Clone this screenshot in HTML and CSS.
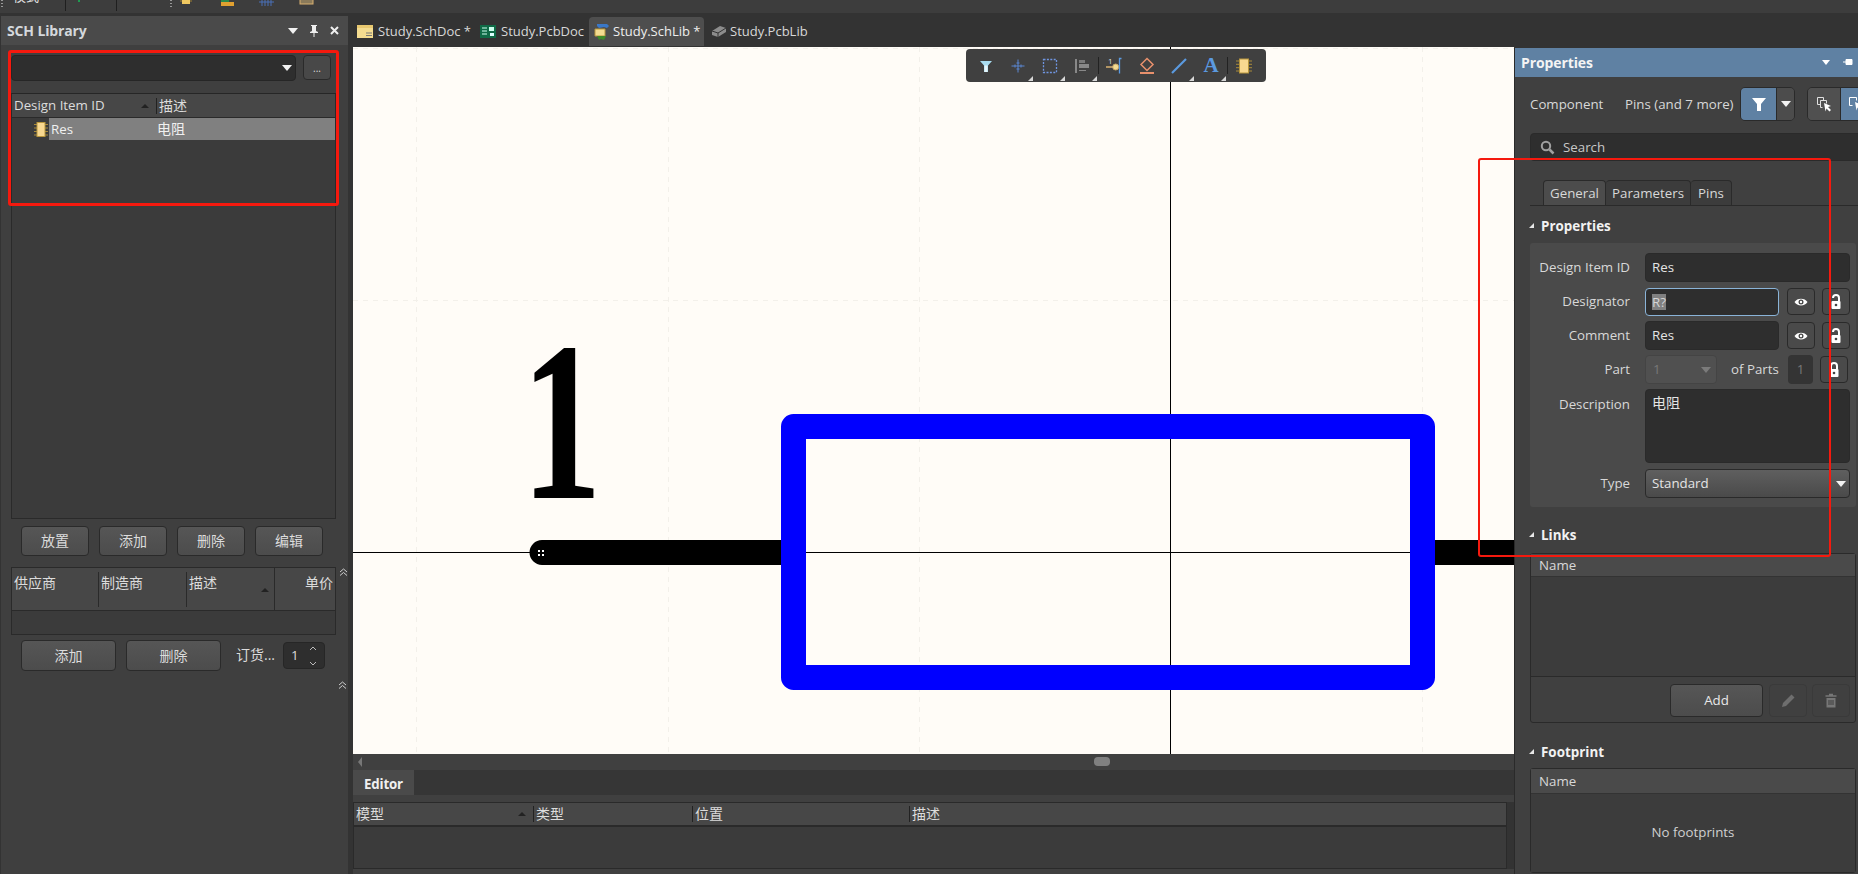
FILE: index.html
```html
<!DOCTYPE html>
<html lang="zh">
<head>
<meta charset="utf-8">
<title>SCH Library</title>
<link rel="stylesheet" href="styles.css">
</head>
<body>
<div class="app">
  <div class="topbar">
    <span class="grip"></span>
    <span class="top-label">模式</span>
    <span class="top-sep s1"></span>
    <span class="top-dot"></span>
    <span class="top-sep s2"></span>
    <span class="grip g2"></span>
    <svg class="top-ic i1" width="12" height="6" viewBox="0 0 12 6"><rect x="2" y="-4" width="8" height="8" fill="#f0c860"/><path d="M0 1h2M10 1h2" stroke="#a08030"/></svg>
    <svg class="top-ic i2" width="16" height="7" viewBox="0 0 16 7"><rect x="2" y="0" width="8" height="2" fill="#2a8a4a"/><rect x="2" y="2" width="13" height="4" fill="#e0a030"/></svg>
    <svg class="top-ic i3" width="15" height="6" viewBox="0 0 15 6"><path d="M0 2h15M3 0v6M6 0v6M9 0v6M12 0v6" stroke="#4a70b8"/></svg>
    <svg class="top-ic i4" width="15" height="6" viewBox="0 0 15 6"><rect x="1" y="-3" width="13" height="7" fill="#8a7a5a" stroke="#d8b070"/></svg>
  </div>

  <div class="main">
    <aside class="left">
      <header class="panel-head">
        <h1 class="panel-title">SCH Library</h1>
        <span class="head-icons">
          <span class="tri-down"></span>
          <svg width="10" height="12" viewBox="0 0 10 12"><path d="M2 0h6v1H7v5l2 1v1H5.500v4h-1V8H1V7l2-1V1H2z" fill="#eee"/></svg>
          <svg width="9" height="9" viewBox="0 0 9 9"><path d="M1 1l7 7M8 1L1 8" stroke="#eee" stroke-width="2"/></svg>
        </span>
      </header>
      <div class="combo-row">
        <div class="combo"><span class="tri-down"></span></div>
        <button class="btn more">...</button>
      </div>
      <div class="tree">
        <div class="tree-head">
          <span class="th-id">Design Item ID<i class="sort"></i></span>
          <span class="th-desc">描述</span>
        </div>
        <div class="tree-row">
          <svg class="comp-ic" width="14" height="15" viewBox="0 0 14 15"><path d="M0 2.500h14M0 6h14M0 9.500h14M0 13h14" stroke="#a88a3a"/><rect x="3" y="0.500" width="8" height="14" fill="#f8d890" stroke="#b8963c"/></svg>
          <span class="row-sel"><span class="rs-name">Res</span><span class="rs-desc">电阻</span></span>
        </div>
      </div>
      <div class="btn-row">
        <button class="btn act">放置</button>
        <button class="btn act">添加</button>
        <button class="btn act">删除</button>
        <button class="btn act">编辑</button>
      </div>
      <div class="supplier-wrap">
        <div class="supplier">
          <div class="sup-head">
            <span class="sup-cell">供应商</span>
            <span class="sup-cell">制造商</span>
            <span class="sup-cell tall">描述<i class="sort"></i></span>
            <span class="sup-cell end">单价</span>
          </div>
          <div class="sup-body"></div>
        </div>
        <svg class="chev" width="9" height="8" viewBox="0 0 9 8"><path d="M1 4l3.500-3L8 4M1 7.500l3.500-3 3.500 3" fill="none" stroke="#cfcfcf"/></svg>
      </div>
      <div class="btn-row two">
        <button class="btn act wide">添加</button>
        <button class="btn act wide">删除</button>
        <span class="order-label">订货...</span>
        <div class="spin"><span>1</span>
          <svg width="8" height="20" viewBox="0 0 8 20"><path d="M1 4l3-3 3 3M1 16l3 3 3-3" fill="none" stroke="#bbb"/></svg>
        </div>
      </div>
      <div class="chev-row">
        <svg class="chev" width="9" height="8" viewBox="0 0 9 8"><path d="M1 4l3.500-3L8 4M1 7.500l3.500-3 3.500 3" fill="none" stroke="#cfcfcf"/></svg>
      </div>
    </aside>

    <section class="center">
      <nav class="doc-tabs">
        <span class="doc-tab">
          <svg width="16" height="13" viewBox="0 0 16 13"><rect width="16" height="13" fill="#f4dc90"/><rect x="0" y="0" width="16" height="3" fill="#e8c870"/><path d="M9 8h6M9 10.500h6" stroke="#777"/></svg>
          <span>Study.SchDoc *</span>
        </span>
        <span class="doc-tab t2">
          <svg width="16" height="13" viewBox="0 0 16 13"><rect width="16" height="13" fill="#0f6a46"/><path d="M2 3h5M2 6h5M2 9h5" stroke="#cfe"/><rect x="9" y="2" width="5" height="4" fill="#cfe"/><rect x="10" y="8" width="4" height="3" fill="#dff"/></svg>
          <span>Study.PcbDoc</span>
        </span>
        <span class="doc-tab active">
          <svg width="16" height="18" viewBox="0 0 16 18"><path d="M3 1h10l2 2-2 2-3-1-5 1-2-2z" fill="#3a78c8"/><path d="M1 6h10v7H1z" fill="#f4dc90" stroke="#b8963c"/><path d="M3 13h9l-2 4-3-1-2 1z" fill="#3f8a2a"/></svg>
          <span>Study.SchLib *</span>
        </span>
        <span class="doc-tab t4">
          <svg width="16" height="13" viewBox="0 0 16 13"><path d="M1 6l8-5 6 2v4l-8 5-6-2z" fill="#8c8c8c"/><path d="M1 6l6 2 8-5M7 8v4" stroke="#333" fill="none"/></svg>
          <span>Study.PcbLib</span>
        </span>
      </nav>

      <div class="canvas">
        <svg class="sheet" width="1162" height="707" viewBox="0 0 1162 707">
          <path class="grid-lines" d="M63.500 0V707M315.500 0V707M566.500 0V707M1069.500 0V707M0 1.500H1162M0 253.500H1162"/>
          <path class="cross" d="M817.500 0V707M0 505.500H1162"/>
          <path d="M189 493H428V518H189A12.500 12.500 0 0 1 189 493Z" fill="#000"/>
          <rect x="1082" y="493" width="80" height="25" fill="#000"/>
          <rect x="440.500" y="379.500" width="629" height="251" fill="none" stroke="#0000ff" stroke-width="25" stroke-linejoin="round"/>
          <path d="M185 503h2v2h-2zM189 503h2v2h-2zM185 507h2v2h-2zM189 507h2v2h-2z" fill="#fff"/>
        </svg>
        <div class="pin-number">1</div>

        <div class="toolbar">
          <span class="tb-btn">
            <svg width="20" height="20" viewBox="0 0 20 20"><path d="M4 5h12l-4 4.500V16H8V9.500z" fill="#a8dcf0"/><path d="M8.500 9.500h3V16h-3z" fill="#e8f6fb"/></svg>
          </span>
          <span class="tb-btn menu">
            <svg width="20" height="20" viewBox="0 0 20 20"><path d="M10 3.500v13M3.500 10h13" stroke="#5b86d0"/><path d="M7 8.500v3M13 8.500v3M8.500 7h3M8.500 13h3" stroke="#5b86d0"/></svg>
          </span>
          <span class="tb-btn menu">
            <svg width="20" height="20" viewBox="0 0 20 20"><rect x="3.500" y="3.500" width="13" height="13" fill="none" stroke="#6f95e0" stroke-width="1.300" stroke-dasharray="2 1.400"/></svg>
          </span>
          <span class="tb-btn menu">
            <svg width="20" height="20" viewBox="0 0 20 20"><rect x="3" y="3" width="2" height="14" fill="#888"/><rect x="7" y="4" width="6" height="3" fill="#7a7a7a"/><rect x="7" y="8" width="10" height="4" fill="#888"/><path d="M7 14.500h7" stroke="#888"/></svg>
          </span>
          <i class="tb-sep"></i>
          <span class="tb-btn">
            <svg width="18" height="20" viewBox="0 0 18 20"><path d="M0 11h7" stroke="#d8b070" stroke-width="1.500"/><circle cx="9.700" cy="11" r="3" fill="#f4dc90" stroke="#c8a868"/><path d="M15.500 2.500h-2v15" fill="none" stroke="#5b9ae0" stroke-width="1.300"/><text class="tb-one" x="2" y="8">1</text></svg>
          </span>
          <span class="tb-btn">
            <svg width="20" height="20" viewBox="0 0 20 20"><path d="M10 2.500l6 6-6 6-6-6z" fill="none" stroke="#e8906c" stroke-width="1.500"/><rect x="3" y="16" width="14" height="2" fill="#e8906c"/></svg>
          </span>
          <span class="tb-btn menu">
            <svg width="20" height="20" viewBox="0 0 20 20"><path d="M3 17L17 3" stroke="#5b9ae0" stroke-width="2.200"/></svg>
          </span>
          <span class="tb-btn menu"><span class="tb-a">A</span></span>
          <i class="tb-sep"></i>
          <span class="tb-btn">
            <svg width="16" height="16" viewBox="0 0 16 16"><path d="M0 3h16M0 6.300h16M0 9.700h16M0 13h16" stroke="#a88a3a"/><rect x="3.500" y="1" width="9" height="14" fill="#f8d890" stroke="#b8963c"/></svg>
          </span>
        </div>
      </div>

      <div class="hscroll"><span class="tri-left"></span><span class="thumb"></span></div>
      <div class="editor-strip"><span class="editor-tab">Editor</span></div>
      <div class="editor-gap"></div>
      <div class="editor-table">
        <div class="ed-head">
          <span class="ed-col c1">模型<i class="sort"></i></span>
          <span class="ed-col c2">类型</span>
          <span class="ed-col c3">位置</span>
          <span class="ed-col c4">描述</span>
        </div>
      </div>
    </section>

    <aside class="right">
      <header class="prop-head">
        <h2 class="prop-title">Properties</h2>
        <span class="prop-icons">
          <span class="tri-down small"></span>
          <svg width="10" height="9" viewBox="0 0 10 9"><path d="M0 4h3M3 1.500h6v5H3z" fill="#fff" stroke="#fff"/></svg>
        </span>
      </header>
      <div class="filter-row">
        <span class="f-label">Component</span>
        <span class="f-label pins">Pins (and 7 more)</span>
        <div class="split">
          <span class="split-main">
            <svg width="16" height="16" viewBox="0 0 16 16"><path d="M1 2h14l-5 6v7H6V8z" fill="#fff"/></svg>
          </span>
          <span class="split-drop"><span class="tri-down"></span></span>
        </div>
        <div class="sel-mode">
          <span class="sel-a">
            <svg width="16" height="16" viewBox="0 0 16 16"><path d="M1.500 1.500h6v3M1.500 1.500v7h3" fill="none" stroke="#e0e0e0"/><path d="M4.500 4.500h6v3M4.500 4.500v7h2" fill="none" stroke="#e0e0e0"/><path d="M8 7l7 3-3 1 3 3-1.500 1.500-3-3-1 3z" fill="#fff"/></svg>
          </span>
          <span class="sel-b">
            <svg width="16" height="16" viewBox="0 0 16 16"><path d="M1.500 1.500h7v3M1.500 1.500v8h3" fill="none" stroke="#fff"/><path d="M7 6l7 3-3 1 3 3-1.500 1.500-3-3-1 3z" fill="#fff"/></svg>
          </span>
        </div>
      </div>
      <div class="search">
        <svg width="15" height="15" viewBox="0 0 15 15"><circle cx="6" cy="6" r="4.200" fill="none" stroke="#a0a0a0" stroke-width="2"/><path d="M9.500 9.500l4 4" stroke="#a0a0a0" stroke-width="2.500"/></svg>
        <span>Search</span>
      </div>
      <div class="tabs">
        <span class="tab on">General</span>
        <span class="tab w2">Parameters</span>
        <span class="tab w3">Pins</span>
      </div>
      <h3 class="sec-title first"><i class="sec-tri"></i>Properties</h3>
      <div class="card">
        <div class="field"><label>Design Item ID</label><div class="input grow">Res</div></div>
        <div class="field"><label>Designator</label><div class="input short focus"><span class="hl">R?</span></div>
          <span class="ic-btn"><svg width="14" height="10" viewBox="0 0 14 10"><path d="M0.500 5C3 0.500 11 0.500 13.500 5 11 9.500 3 9.500 0.500 5z" fill="#fff"/><circle cx="7" cy="5" r="2.500" fill="#444"/><circle cx="7" cy="5" r="1.200" fill="#fff"/></svg></span>
          <span class="ic-btn"><svg width="12" height="16" viewBox="0 0 12 16"><path d="M3 4a3 3 0 0 1 6 0v3" fill="none" stroke="#fff" stroke-width="2"/><rect x="1.500" y="7" width="9" height="8" rx="1" fill="#fff"/><circle cx="6" cy="11" r="1.300" fill="#444"/></svg></span>
        </div>
        <div class="field"><label>Comment</label><div class="input short">Res</div>
          <span class="ic-btn"><svg width="14" height="10" viewBox="0 0 14 10"><path d="M0.500 5C3 0.500 11 0.500 13.500 5 11 9.500 3 9.500 0.500 5z" fill="#fff"/><circle cx="7" cy="5" r="2.500" fill="#444"/><circle cx="7" cy="5" r="1.200" fill="#fff"/></svg></span>
          <span class="ic-btn"><svg width="12" height="16" viewBox="0 0 12 16"><path d="M3 4a3 3 0 0 1 6 0v3" fill="none" stroke="#fff" stroke-width="2"/><rect x="1.500" y="7" width="9" height="8" rx="1" fill="#fff"/><circle cx="6" cy="11" r="1.300" fill="#444"/></svg></span>
        </div>
        <div class="field"><label>Part</label>
          <div class="part-select">1<span class="tri-down dim"></span></div>
          <span class="of-parts">of Parts</span>
          <div class="part-box">1</div>
          <span class="ic-btn"><svg width="12" height="16" viewBox="0 0 12 16"><path d="M3 7V4a3 3 0 0 1 6 0v3" fill="none" stroke="#fff" stroke-width="2"/><rect x="1.500" y="7" width="9" height="8" rx="1" fill="#fff"/><circle cx="6" cy="11" r="1.300" fill="#444"/></svg></span>
        </div>
        <div class="field desc"><label>Description</label><div class="input grow area">电阻</div></div>
        <div class="field type"><label>Type</label><div class="type-select">Standard<span class="tri-down"></span></div></div>
      </div>

      <h3 class="sec-title links"><i class="sec-tri"></i>Links</h3>
      <div class="list">
        <div class="list-head">Name</div>
        <div class="list-body"></div>
        <div class="list-actions">
          <button class="btn add">Add</button>
          <span class="mute-btn"><svg width="16" height="16" viewBox="0 0 16 16"><path d="M11.500 1.500l3 3L6 13l-4 1 1-4z" fill="#6e6e6e"/></svg></span>
          <span class="mute-btn"><svg width="12" height="15" viewBox="0 0 12 15"><path d="M4 1.500h4M0.500 3h11" stroke="#777" stroke-width="1.500"/><path d="M1.500 5h9v9.500h-9z" fill="#777"/><path d="M4 7v5M6 7v5M8 7v5" stroke="#3f3f3f"/></svg></span>
        </div>
      </div>

      <h3 class="sec-title foot"><i class="sec-tri"></i>Footprint</h3>
      <div class="list footprints">
        <div class="list-head">Name</div>
        <div class="empty">No footprints</div>
      </div>
    </aside>
  </div>

  <div class="annot a-left"></div>
  <div class="annot a-right"></div>
</div>
</body>
</html>
```

FILE: styles.css
```css
* { box-sizing: border-box; }
html, body { margin: 0; padding: 0; background: #333; }
body { width: 1858px; height: 874px; overflow: hidden; }
h1, h2, h3 { margin: 0; }
.app {
  position: relative;
  width: 1858px; height: 874px; overflow: hidden;
  display: flex; flex-direction: column;
  font: 13.3px/1.2 "Open Sans", "Noto Sans CJK SC", sans-serif;
  color: #dcdcdc;
  background: #333;
}
button { font: inherit; color: inherit; }

/* shared glyphs */
.tri-down { display: inline-block; width: 0; height: 0; border: 5px solid transparent; border-top: 6px solid #f2f2f2; border-bottom: 0; }
.tri-down.small { border-width: 5px 4px 0; border-top-color: #fff; border-style: solid; border-left-color: transparent; border-right-color: transparent; }
.tri-down.dim { border-top-color: #7b7b7b; }
.sort { display: inline-block; width: 0; height: 0; border: 4px solid transparent; border-bottom: 4px solid #222; border-top: 0; }
.btn {
  border: 1px solid #2a2a2a; border-radius: 4px;
  background: linear-gradient(#565656, #4c4c4c);
  padding: 0; text-align: center;
}

/* top bar */
.topbar { height: 13px; background: #3d3d3d; position: relative; overflow: hidden; flex: none; }
.top-label { position: absolute; left: 13px; top: -14px; font-size: 13px; line-height: 20px; color: #e4e4e4; }
.grip { position: absolute; left: 1px; top: 0; width: 2px; height: 7px; background: repeating-linear-gradient(#999 0 1px, transparent 1px 3px); }
.grip.g2 { left: 170px; }
.top-sep { position: absolute; top: 0; width: 1px; height: 11px; background: #1f1f1f; }
.top-sep.s1 { left: 65px; }
.top-sep.s2 { left: 116px; }
.top-dot { position: absolute; left: 78px; top: 0; width: 2px; height: 2px; background: #1f9a50; }
.top-ic { position: absolute; top: 0; display: block; }
.top-ic.i1 { left: 180px; }
.top-ic.i2 { left: 219px; }
.top-ic.i3 { left: 259px; }
.top-ic.i4 { left: 299px; }

.main { flex: 1; display: flex; min-height: 0; }

/* left panel */
.left {
  width: 347px; margin: 3px 5px 0 1px; flex: none;
  background: #3f3f3f;
  display: flex; flex-direction: column;
}
.panel-head { height: 29px; background: #4a4a4a; display: flex; align-items: center; padding: 0 9px 0 6px; flex: none; }
.panel-title { font-size: 14px; font-weight: 700; color: #d4d8dc; flex: 1; letter-spacing: -0.15px; padding-top: 2px; }
.head-icons { display: flex; align-items: center; gap: 11px; }
.combo-row { display: flex; gap: 7px; padding: 10px 0 0 10px; align-items: flex-start; }
.combo {
  width: 285px; height: 26px; background: #2e2e2e; border: 1px solid #262626; border-radius: 4px;
  display: flex; align-items: center; justify-content: flex-end; padding-right: 3px;
}
.btn.more { width: 28px; height: 25px; font-size: 10px; line-height: 25px; background: #484848; }
.tree { margin: 12px 0 0 10px; width: 325px; height: 426px; border: 1px solid #2a2a2a; background: #3b3b3b; flex: none; border-top-color: #262626; }
.tree-head { height: 24px; background: #474747; border-bottom: 1px solid #2a2a2a; display: flex; align-items: center; }
.th-id { width: 145px; padding: 1px 7px 0 2px; position: relative; display: flex; justify-content: space-between; align-items: center; height: 16px; border-right: 1px solid #222; white-space: nowrap; }
.th-desc { padding: 1px 0 0 2px; font-size: 14px; }
.tree-row { height: 22px; display: flex; align-items: center; }
.comp-ic { margin-left: 22px; flex: none; }
.row-sel { margin-left: 1px; flex: 1; height: 22px; background: #808080; display: flex; align-items: center; color: #f0f0f0; padding-top: 1px; }
.rs-name { width: 108px; padding-left: 2px; }
.rs-desc { font-size: 14px; }
.btn-row { display: flex; gap: 10px; margin: 7px 0 0 20px; flex: none; }
.btn.act { width: 68px; height: 30px; font-size: 14px; line-height: 28px; }
.supplier-wrap { display: flex; margin: 11px 0 0 10px; gap: 2px; align-items: flex-start; flex: none; }
.supplier { width: 325px; height: 68px; border: 1px solid #2a2a2a; background: #3b3b3b; }
.sup-head { height: 43px; background: #474747; border-bottom: 1px solid #2a2a2a; display: grid; grid-template-columns: 87px 88px 88px 1fr; font-size: 14px; }
.sup-cell { padding: 3px 0 0 2px; height: 35px; margin-top: 4px; border-right: 1px solid #2a2a2a; position: relative; line-height: 16px; }
.sup-cell.tall { height: 42px; margin-top: 0; padding-top: 7px; }
.sup-cell.tall .sort { position: absolute; right: 5px; top: 20px; }
.sup-cell.end { border: 0; text-align: right; padding: 3px 2px 0 0; }
.chev { display: block; }
.supplier-wrap .chev { margin: 1px 0 0 1px; }
.btn-row.two { margin-top: 5px; align-items: center; }
.btn.wide { width: 95px; height: 31px; line-height: 29px; }
.order-label { margin-left: 5px; font-size: 14px; width: 37px; white-space: nowrap; }
.spin { width: 42px; height: 27px; background: #2e2e2e; border: 1px solid #262626; border-radius: 4px; display: flex; justify-content: space-between; align-items: center; padding: 0 7px; }
.chev-row { display: flex; justify-content: flex-end; padding: 10px 1px 0 0; }

/* center */
.center { width: 1161px; flex: none; display: flex; flex-direction: column; min-width: 0; }
.doc-tabs { height: 34px; display: flex; align-items: flex-end; padding-bottom: 1px; flex: none; background: #333; }
.doc-tab { height: 29px; display: flex; align-items: center; gap: 5px; padding-left: 4px; color: #d8d8d8; white-space: nowrap; font-size: 13px; }
.doc-tab:first-child { width: 127px; }
.doc-tab.t2 { width: 109px; padding-left: 0; }
.doc-tab.active { width: 115px; background: #4e4e4e; border-radius: 4px 4px 0 0; padding-left: 5px; gap: 3px; color: #eee; }
.doc-tab.t4 { padding-left: 7px; gap: 3px; }

.canvas { position: relative; height: 707px; flex: none; background: #fffcf7; overflow: hidden; }
.sheet { position: absolute; left: 0; top: 0; display: block; }
.grid-lines { stroke: #f3f0ea; stroke-width: 1; stroke-dasharray: 5 5; fill: none; }
.cross { stroke: #000; stroke-width: 1; fill: none; shape-rendering: crispEdges; }
.pin-number { position: absolute; left: 152px; top: 262px; font: 700 226px/1 "Liberation Serif", serif; color: #000; transform: scaleX(0.71); }
.toolbar {
  position: absolute; left: 613px; top: 2px; width: 300px; height: 33px;
  background: #404040; border-radius: 4px; display: flex; align-items: center; padding-left: 4px;
}
.tb-btn { width: 32px; height: 33px; flex: none; display: flex; align-items: center; justify-content: center; position: relative; }
.tb-btn.menu::after { content: ""; position: absolute; right: 1px; bottom: 1px; border: solid transparent; border-width: 0 0 5px 5px; border-bottom-color: #d8d8d8; }
.tb-sep { width: 1px; height: 17px; background: #222; flex: none; }
.tb-one { font: 8px "Open Sans", sans-serif; fill: #ddd; }
.tb-a { font: 700 21px/1 "Liberation Serif", serif; color: #5b9ae0; }

.hscroll { height: 16px; background: #404040; display: flex; align-items: center; position: relative; flex: none; }
.tri-left { margin-left: 5px; border: solid transparent; border-width: 5px 4px 5px 0; border-right-color: #777; }
.thumb { position: absolute; left: 741px; top: 3px; width: 16px; height: 9px; border-radius: 4px; background: #808080; }
.editor-strip { height: 25px; background: #363636; display: flex; flex: none; }
.editor-tab { width: 61px; background: #4a4a4a; font-weight: 700; color: #f0f0f0; display: flex; align-items: center; justify-content: center; letter-spacing: -0.2px; padding-top: 5px; }
.editor-gap { height: 7px; background: #404040; flex: none; }
.editor-table { height: 67px; width: 1154px; border: 1px solid #2a2a2a; background: #3b3b3b; flex: none; }
.ed-head { height: 24px; background: #474747; border-bottom: 2px solid #2a2a2a; display: flex; align-items: center; font-size: 14px; }
.ed-col { height: 16px; line-height: 16px; padding-left: 2px; position: relative; border-right: 1px solid #222; flex: none; }
.ed-col.c1 { width: 180px; display: flex; justify-content: space-between; align-items: center; padding-right: 7px; }
.ed-col.c2 { width: 159px; }
.ed-col.c3 { width: 217px; }
.ed-col.c4 { border: 0; }
.center::after { content: ""; flex: 1; background: #404040; }

/* right panel */
.right { flex: 1; margin-top: 35px; min-width: 0; background: #404040; border-left: 1px solid #2a2a2a; display: flex; flex-direction: column; overflow: hidden; }
.prop-head { height: 29px; background: #5f81a3; display: flex; align-items: center; padding-left: 6px; flex: none; }
.prop-title { font-size: 14px; font-weight: 700; color: #f4f4f4; flex: 1; letter-spacing: -0.1px; padding-top: 1px; }
.prop-icons { display: flex; gap: 13px; align-items: center; padding-right: 5px; }
.filter-row { display: flex; align-items: center; margin-top: 10px; padding-left: 15px; height: 34px; flex: none; white-space: nowrap; }
.f-label { width: 95px; flex: none; color: #d8d8d8; padding-top: 1px; }
.f-label.pins { width: 115px; }
.split { width: 55px; height: 34px; border: 1px solid #2a2a2a; border-radius: 5px; display: flex; overflow: hidden; flex: none; }
.split-main { width: 35px; background: #5f81a3; display: flex; align-items: center; justify-content: center; }
.split-drop { flex: 1; background: #4c4c4c; border-left: 1px solid #2a2a2a; display: flex; align-items: center; justify-content: center; }
.sel-mode { margin-left: 12px; width: 70px; height: 34px; border: 1px solid #2a2a2a; border-radius: 5px; display: flex; overflow: hidden; flex: none; }
.sel-a { width: 33px; background: #505050; border-right: 1px solid #2a2a2a; display: flex; align-items: center; justify-content: center; flex: none; }
.sel-b { flex: 1; background: #5f81a3; display: flex; align-items: center; padding-left: 7px; }
.search { margin: 12px 0 0 15px; height: 28px; width: 340px; background: #2e2e2e; border: 1px solid #2a2a2a; border-radius: 4px; display: flex; align-items: center; padding: 1px 0 0 9px; gap: 8px; color: #c8c8c8; flex: none; }
.tabs { margin: 19px 0 0 15px; height: 26px; border-bottom: 1px solid #2a2a2a; display: flex; padding-left: 13px; flex: none; }
.tab { width: 63px; height: 25px; padding-top: 1px; display: flex; align-items: center; justify-content: center; background: #3c3c3c; border: 1px solid #2a2a2a; border-bottom: 0; border-left: 0; border-radius: 4px 4px 0 0; color: #d8d8d8; }
.tab.on { background: #4c4c4c; border-left: 1px solid #2a2a2a; }
.tab.w2 { width: 85px; }
.tab.w3 { width: 41px; }
.sec-title { font-size: 13.4px; font-weight: 700; color: #f2f2f2; height: 18px; display: flex; align-items: center; padding-left: 26px; position: relative; line-height: 18px; flex: none; }
.sec-tri { position: absolute; left: 14px; top: 6px; border: solid transparent; border-width: 0 0 5px 5px; border-bottom-color: #e8e8e8; }
.sec-title.first { margin-top: 11px; }
.sec-title.links { margin-top: 19px; }
.sec-title.foot { margin-top: 20px; }
.card { margin: 8px 2px 0 15px; height: 264px; background: #4a4a4a; border-radius: 3px; padding: 10px 6px 0 0; flex: none; }
.field { display: flex; align-items: center; height: 29px; margin-bottom: 5px; }
.field label { width: 100px; text-align: right; margin-right: 15px; color: #d8d8d8; flex: none; padding-top: 1px; white-space: nowrap; }
.input { height: 29px; background: #2e2e2e; border: 1px solid #2a2a2a; border-radius: 4px; padding: 1px 0 0 6px; display: flex; align-items: center; color: #e4e4e4; }
.input.grow { flex: 1; }
.input.short { width: 134px; flex: none; margin-right: 8px; }
.input.focus { border-color: #8ab4d8; height: 28px; }
.hl { background: #808080; color: #d4d4d4; line-height: 16px; }
.ic-btn { width: 28px; height: 27px; border: 1px solid #2a2a2a; border-radius: 4px; background: #4a4a4a; display: flex; align-items: center; justify-content: center; flex: none; margin-right: 7px; }
.ic-btn:last-child { margin-right: 0; }
.part-select { width: 72px; height: 29px; background: #505050; border: 1px solid #444; border-radius: 4px; display: flex; justify-content: space-between; align-items: center; padding: 0 5px 0 7px; color: #787878; flex: none; }
.of-parts { width: 59px; padding-left: 14px; flex: none; white-space: nowrap; color: #d8d8d8; }
.part-box { width: 25px; height: 29px; margin: 0 7px 0 12px; background: #343434; border-radius: 4px; display: flex; align-items: center; justify-content: center; color: #787878; flex: none; }
.field.desc { height: 74px; align-items: flex-start; margin-bottom: 6px; }
.field.desc label { padding-top: 8px; }
.input.area { height: 74px; align-items: flex-start; padding-top: 5px; font-size: 14px; }
.type-select { flex: 1; height: 29px; background: linear-gradient(#5f5f5f, #4a4a4a); border: 1px solid #2a2a2a; border-radius: 4px; display: flex; justify-content: space-between; align-items: center; padding: 1px 3px 0 6px; color: #e4e4e4; }
.list { margin: 9px 2px 0 15px; width: 326px; height: 170px; border: 1px solid #2a2a2a; border-radius: 3px; display: flex; flex-direction: column; flex: none; }
.list-head { height: 23px; background: #4a4a4a; border-bottom: 1px solid #333; padding: 2px 0 0 8px; display: flex; align-items: center; flex: none; color: #d8d8d8; }
.list-body { height: 100px; background: #3c3c3c; border-bottom: 1px solid #2a2a2a; flex: none; }
.list-actions { flex: 1; display: flex; justify-content: flex-end; align-items: center; padding: 2px 5px 0 0; gap: 5px; }
.btn.add { width: 93px; height: 33px; color: #e8e8e8; margin-right: 1px; padding-top: 1px; }
.mute-btn { width: 38px; height: 33px; border: 1px solid #3a3a3a; border-radius: 4px; display: flex; align-items: center; justify-content: center; }
.list.footprints { margin-top: 7px; height: 105px; }
.list.footprints .list-head { height: 25px; }
.empty { flex: 1; background: #3c3c3c; display: flex; align-items: center; justify-content: center; color: #d0d0d0; }

/* red annotation frames drawn over the screenshot */
.annot { position: absolute; border-style: solid; border-color: #f5190e; border-radius: 3px; pointer-events: none; }
.a-left { left: 8px; top: 50px; width: 331px; height: 156px; border-width: 3px; }
.a-right { left: 1478px; top: 158px; width: 353px; height: 399px; border-width: 2.500px; }
```
